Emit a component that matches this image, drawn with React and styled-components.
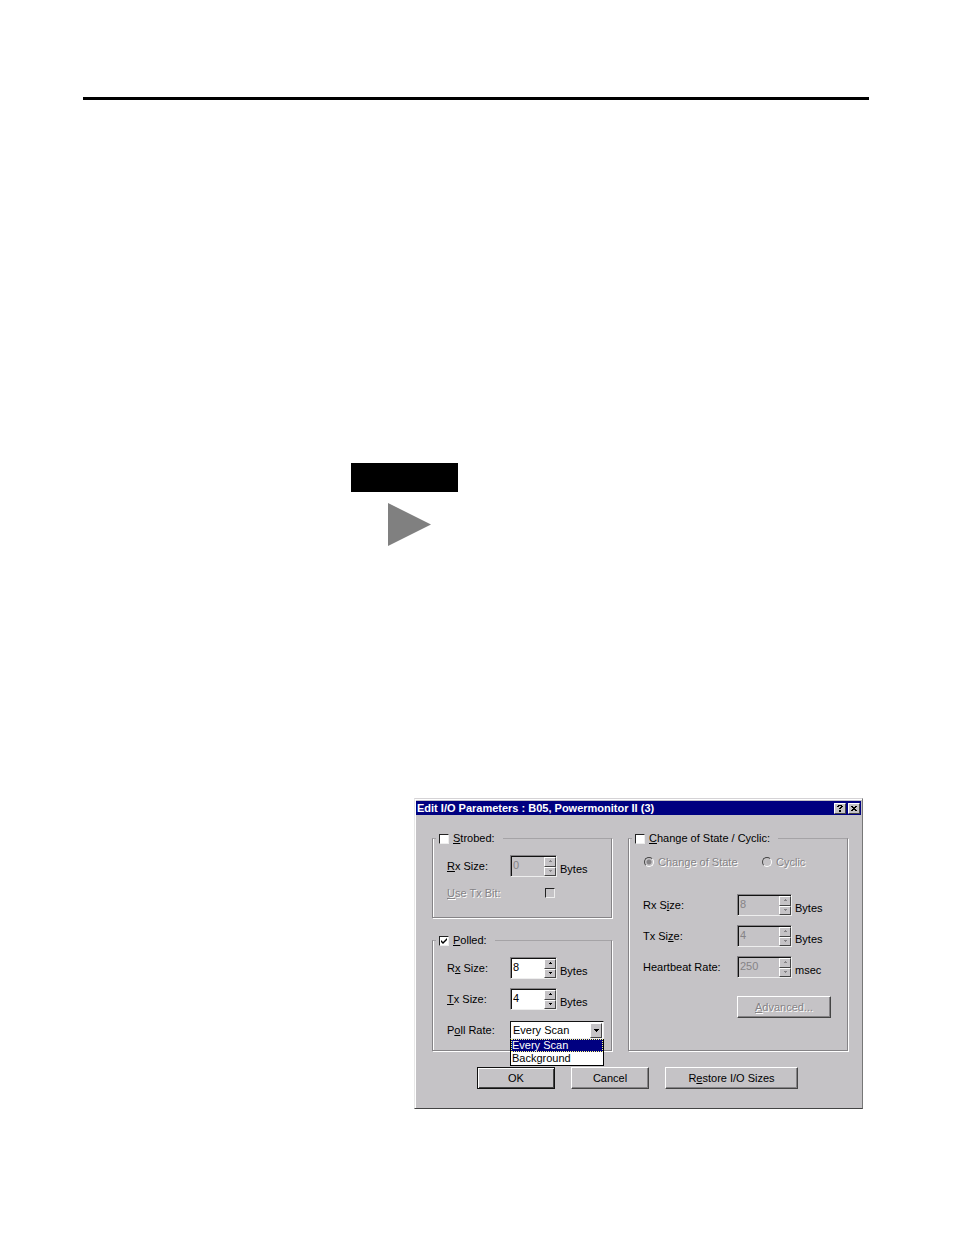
import React, { useState } from 'react';
import styled, { createGlobalStyle, css } from 'styled-components';

const GlobalStyle = createGlobalStyle`
  * {
    box-sizing: border-box;
  }
  body {
    margin: 0;
    background: #fff;
  }
  button, input, select {
    font: inherit;
    color: inherit;
    margin: 0;
    padding: 0;
  }
`;

const face = '#c5c3c6';
const shade = '#858386';

const Page = styled.main`
  padding: 97px 85px 127px 83px;
  font-family: 'Liberation Sans', Arial, sans-serif;
  font-size: 11px;
  line-height: 13px;
  color: #000;
`;

const Rule = styled.hr`
  height: 3px;
  margin: 0;
  border: none;
  background: #000;
`;

const Note = styled.div`
  display: flex;
  flex-direction: column;
  gap: 11px;
  width: 107px;
  margin: 363px 0 0 268px;
`;

const NoteTag = styled.div`
  width: 100%;
  height: 29px;
  background: #000;
`;

const NoteArrow = styled.svg`
  width: 43px;
  height: 43px;
  margin-left: 37px;
  fill: #808080;
`;

const Dialog = styled.section`
  margin: 252px 6px 0 331px;
  padding: 1px;
  background: ${face};
  border: 1px solid;
  border-color: #d5d3d6 #777 #444 #e8e8e8;
  box-shadow: inset 1px 1px 0 #fff;
`;

const TitleBar = styled.header`
  display: flex;
  align-items: center;
  gap: 2px;
  height: 14px;
  margin-top: 1px;
  padding: 0 1px;
  background: #000080;
  color: #fff;
`;

const Title = styled.h1`
  flex: 1;
  margin: 0;
  font-size: 11px;
  line-height: 14px;
  white-space: nowrap;
`;

const raised = css`
  background: ${face};
  border: 1px solid;
  border-color: #fff #444 #444 #fff;
`;

const TitleButton = styled.button`
  ${raised}
  display: flex;
  align-items: center;
  justify-content: center;
  width: 12px;
  height: 11px;
`;

const Body = styled.form`
  padding: 17px 13px 18px 16px;
`;

const Groups = styled.div`
  display: grid;
  grid-template-columns: 9fr 11fr;
  gap: 16px;
`;

const Column = styled.div`
  display: flex;
  flex-direction: column;
  gap: 16px;
`;

const Group = styled.fieldset`
  min-width: 0;
  margin: 0;
  padding: 0;
  border: 1px solid ${shade};
  border-top-color: #a5a3a6;
  box-shadow: 1px 1px 0 #fff, inset 1px 0 0 #fff;
`;

const Legend = styled.legend`
  margin-left: 3px;
  padding: 0 8px 0 3px;
  background: ${face};
`;

const disabledText = css`
  color: ${shade};
  text-shadow: 1px 1px 0 #fff;
`;

const CheckLabel = styled.label`
  display: flex;
  align-items: center;
  gap: 4px;
  white-space: nowrap;
`;

const CheckBox = styled.input.attrs({ type: 'checkbox' })`
  appearance: none;
  width: 10px;
  height: 10px;
  flex: none;
  border: 1px solid;
  border-color: #222 #eee #eee #222;
  background: #fff;
  &:disabled {
    background: ${face};
  }
  &:checked {
    background: #fff url("data:image/svg+xml,%3Csvg xmlns='http://www.w3.org/2000/svg' viewBox='0 0 8 8'%3E%3Cpath d='M1 3v2l2 2 4-4V1L3 5z'/%3E%3C/svg%3E");
  }
`;

const IndentedCheckBox = styled(CheckBox)`
  margin-left: 35px;
`;

const Radio = styled.input.attrs({ type: 'radio' })`
  appearance: none;
  width: 10px;
  height: 10px;
  flex: none;
  border: 1px solid;
  border-color: #444 #fff #fff #444;
  border-radius: 50%;
  background: ${face};
  &:checked {
    background: radial-gradient(circle, ${shade} 2px, ${face} 3px);
  }
`;

const RadioRow = styled.div`
  display: grid;
  grid-template-columns: 118px auto;
  align-items: center;
  height: 22px;
  margin: 6px 0 21px 15px;
`;

const RadioLabel = styled(CheckLabel)`
  ${disabledText}
`;

const Rows = styled.div`
  display: flex;
  flex-direction: column;
  gap: ${(p) => p.$gap || 9}px;
  padding: ${(p) => p.$pad || '10px 0 9px 14px'};
`;

const Row = styled.div`
  display: grid;
  grid-template-columns: ${(p) => (p.$wide ? '94px 55px auto' : '63px 47px auto')};
  align-items: center;
  height: 22px;
  white-space: nowrap;
`;

const FieldLabel = styled.label`
  ${(p) => p.$disabled && disabledText}
`;

const Unit = styled.span`
  padding: 7px 0 0 3px;
`;

const SpinBox = styled.div`
  display: flex;
  height: 22px;
  border: 1px solid;
  border-color: ${shade} #eee #eee ${shade};
  box-shadow: inset 1px 1px 0 #111;
  background: ${(p) => (p.$disabled ? face : '#fff')};
`;

const SpinInput = styled.input`
  flex: 1;
  min-width: 0;
  height: 15px;
  margin: 1px 0 0 1px;
  padding-left: 1px;
  border: none;
  outline: none;
  background: transparent;
  &:disabled {
    color: ${shade};
  }
`;

const SpinButtons = styled.div`
  display: flex;
  flex-direction: column;
  width: 12px;
  padding-top: 1px;
`;

const SpinButton = styled.button`
  ${raised}
  display: flex;
  flex: 1;
  align-items: center;
  justify-content: center;
  &:disabled {
    color: ${shade};
  }
`;

const Combo = styled.div`
  position: relative;
  width: 94px;
  height: 18px;
`;

const ComboSelect = styled.select`
  appearance: none;
  display: block;
  width: 100%;
  height: 18px;
  padding-left: 2px;
  border: 1px solid;
  border-color: #111 #eee #eee #111;
  border-radius: 0;
  background: #fff;
  outline: none;
`;

const ComboArrow = styled.span`
  ${raised}
  position: absolute;
  top: 2px;
  right: 2px;
  bottom: 1px;
  display: flex;
  align-items: center;
  justify-content: center;
  width: 12px;
  pointer-events: none;
`;

const ComboList = styled.ul`
  position: absolute;
  top: 18px;
  left: 0;
  z-index: 1;
  width: 100%;
  margin: 0;
  padding: 0;
  border: 1px solid #000;
  border-top: none;
  background: #fff;
  list-style: none;
`;

const ComboOption = styled.li`
  height: 13px;
  padding-left: 1px;
  line-height: 13px;
  ${(p) =>
    p.$active &&
    css`
      background: #000080;
      color: #fff;
      outline: 1px dotted #ffff80;
      outline-offset: -1px;
    `}
`;

const Button = styled.button`
  ${raised}
  height: 22px;
  box-shadow: inset -1px -1px 0 ${shade};
  ${(p) =>
    p.$primary &&
    css`
      border-color: #111;
      box-shadow: inset 1px 1px 0 #fff, inset -1px -1px 0 #444;
    `}
  &:disabled {
    ${disabledText}
  }
`;

const AdvancedButton = styled(Button)`
  width: 94px;
  margin: 9px 0 0 94px;
`;

const Footer = styled.footer`
  display: grid;
  grid-template-columns: 78px 78px 133px;
  gap: 16px;
  margin: 16px 0 0 45px;
`;

const Arrow = ({ up }) => (
  <svg width="5" height="3" viewBox="0 0 5 3" fill="currentColor" shapeRendering="crispEdges" aria-hidden="true">
    {up ? <path d="M2 0h1v1h1v1H1V1h1z" /> : <path d="M1 0h3v1H3v1H2V1H1z" />}
  </svg>
);

const DropArrow = () => (
  <svg width="5" height="4" viewBox="0 0 5 4" shapeRendering="crispEdges" aria-hidden="true">
    <path d="M0 0h5v1H4v1H3v1H2V2H1V1H0z" />
  </svg>
);

const Spinner = ({ id, value, disabled, label }) => {
  const [current, setCurrent] = useState(value);
  return (
    <SpinBox $disabled={disabled}>
      <SpinInput id={id} value={current} disabled={disabled} onChange={(e) => setCurrent(e.target.value)} />
      <SpinButtons>
        <SpinButton type="button" disabled={disabled} aria-label={`Increase ${label}`} onClick={() => setCurrent(Number(current) + 1)}>
          <Arrow up />
        </SpinButton>
        <SpinButton type="button" disabled={disabled} aria-label={`Decrease ${label}`} onClick={() => setCurrent(Number(current) - 1)}>
          <Arrow />
        </SpinButton>
      </SpinButtons>
    </SpinBox>
  );
};

const SpinRow = ({ id, children, value, unit, label, wide, disabled }) => (
  <Row $wide={wide}>
    <FieldLabel htmlFor={id}>{children}</FieldLabel>
    <Spinner id={id} value={value} disabled={disabled} label={label} />
    <Unit>{unit}</Unit>
  </Row>
);

const rates = ['Every Scan', 'Background'];

const App = () => {
  const [rate, setRate] = useState(rates[0]);

  return (
    <Page>
      <GlobalStyle />
      <Rule />
      <Note>
        <NoteTag />
        <NoteArrow viewBox="0 0 43 43" aria-hidden="true">
          <path d="M0 0L43 21.5L0 43z" />
        </NoteArrow>
      </Note>
      <Dialog role="dialog" aria-labelledby="dialog-title">
        <TitleBar>
          <Title id="dialog-title">Edit I/O Parameters : B05, Powermonitor II (3)</Title>
          <TitleButton type="button" aria-label="Help">
            <svg width="6" height="7" viewBox="0 0 6 7" shapeRendering="crispEdges">
              <path d="M1 0h4v1H1zM0 1h2v1H0zM4 1h2v1H4zM3 2h2v1H3zM2 3h2v1H2zM2 5h2v2H2z" />
            </svg>
          </TitleButton>
          <TitleButton type="button" aria-label="Close">
            <svg width="6" height="5" viewBox="0 0 6 5" shapeRendering="crispEdges">
              <path d="M0 0h2v1H0zM4 0h2v1H4zM1 1h4v1H1zM2 2h2v1H2zM1 3h4v1H1zM0 4h2v1H0zM4 4h2v1H4z" />
            </svg>
          </TitleButton>
        </TitleBar>
        <Body onSubmit={(e) => e.preventDefault()}>
          <Groups>
            <Column>
              <Group>
                <Legend>
                  <CheckLabel>
                    <CheckBox />
                    <span><u>S</u>trobed:</span>
                  </CheckLabel>
                </Legend>
                <Rows $gap={5} $pad="10px 0 13px 14px">
                  <SpinRow id="strobed-rx" value="0" unit="Bytes" label="strobed Rx size" disabled>
                    <u>R</u>x Size:
                  </SpinRow>
                  <Row>
                    <FieldLabel htmlFor="use-tx" $disabled><u>U</u>se Tx Bit:</FieldLabel>
                    <IndentedCheckBox id="use-tx" disabled />
                  </Row>
                </Rows>
              </Group>
              <Group>
                <Legend>
                  <CheckLabel>
                    <CheckBox defaultChecked />
                    <span><u>P</u>olled:</span>
                  </CheckLabel>
                </Legend>
                <Rows>
                  <SpinRow id="polled-rx" value="8" unit="Bytes" label="polled Rx size">
                    R<u>x</u> Size:
                  </SpinRow>
                  <SpinRow id="polled-tx" value="4" unit="Bytes" label="polled Tx size">
                    <u>T</u>x Size:
                  </SpinRow>
                  <Row>
                    <FieldLabel htmlFor="poll-rate">P<u>o</u>ll Rate:</FieldLabel>
                    <Combo>
                      <ComboSelect id="poll-rate" value={rate} onChange={(e) => setRate(e.target.value)}>
                        {rates.map((r) => <option key={r}>{r}</option>)}
                      </ComboSelect>
                      <ComboArrow><DropArrow /></ComboArrow>
                      <ComboList>
                        {rates.map((r) => (
                          <ComboOption key={r} $active={r === rate} onClick={() => setRate(r)}>{r}</ComboOption>
                        ))}
                      </ComboList>
                    </Combo>
                  </Row>
                </Rows>
              </Group>
            </Column>
            <Group>
              <Legend>
                <CheckLabel>
                  <CheckBox />
                  <span><u>C</u>hange of State / Cyclic:</span>
                </CheckLabel>
              </Legend>
              <RadioRow>
                <RadioLabel>
                  <Radio name="mode" defaultChecked disabled />
                  Change of State
                </RadioLabel>
                <RadioLabel>
                  <Radio name="mode" disabled />
                  Cyclic
                </RadioLabel>
              </RadioRow>
              <Rows $pad="0 0 0 14px">
                <SpinRow id="cos-rx" value="8" unit="Bytes" label="Rx size" wide disabled>
                  Rx S<u>i</u>ze:
                </SpinRow>
                <SpinRow id="cos-tx" value="4" unit="Bytes" label="Tx size" wide disabled>
                  Tx Si<u>z</u>e:
                </SpinRow>
                <SpinRow id="heartbeat" value="250" unit="msec" label="heartbeat rate" wide disabled>
                  Heartbeat Rate:
                </SpinRow>
                <AdvancedButton type="button" disabled><u>A</u>dvanced...</AdvancedButton>
              </Rows>
            </Group>
          </Groups>
          <Footer>
            <Button type="submit" $primary>OK</Button>
            <Button type="button">Cancel</Button>
            <Button type="button">R<u>e</u>store I/O Sizes</Button>
          </Footer>
        </Body>
      </Dialog>
    </Page>
  );
};

export default App;
